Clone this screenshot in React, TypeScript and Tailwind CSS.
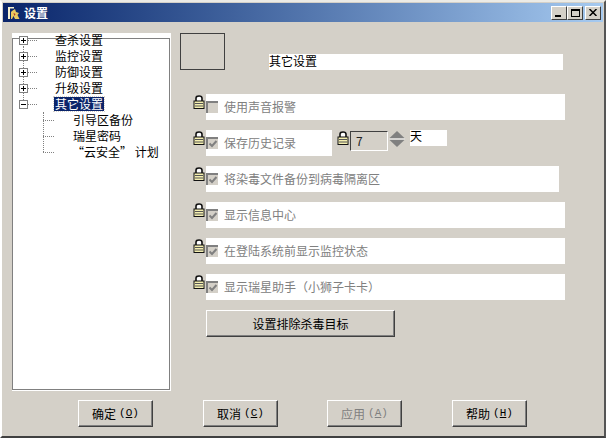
import React from "react";

const font = "[font-family:'Noto_Sans_CJK_SC','Liberation_Sans',sans-serif]";

const Lock = () => (
  <svg width="12" height="14" viewBox="0 0 12 14" className="shrink-0">
    <path d="M3 7V3.2C3 1.6 4 1 6 1s3 .6 3 2.2V7" fill="#fff" stroke="#111" strokeWidth="1.6" />
    <rect x="1" y="6" width="10" height="7.5" fill="#f4efb0" stroke="#111" />
    <path d="M2 8.5h8M2 11h8" stroke="#555" strokeWidth="1" />
  </svg>
);

const Check = ({ checked }: { checked: boolean }) => (
  <div className="relative w-3 h-3 shrink-0 bg-[#d4d0c8] border-l-2 border-t-2 border-[#808080]">
    {checked && (
      <svg width="10" height="10" viewBox="0 0 10 10" className="absolute left-0 top-0">
        <path d="M1.5 4.5L4 7L8.5 2" fill="none" stroke="#808080" strokeWidth="2" />
      </svg>
    )}
  </div>
);

const OptionRow = ({ label, checked = true, w = "w-[359px]", mt = "mt-[10px]" }: { label: string; checked?: boolean; w?: string; mt?: string }) => (
  <div className={`flex items-start ${mt}`}>
    <div className="w-[13px] ml-[23px] pt-[1px]">
      <Lock />
    </div>
    <div className={`flex items-center h-[26px] bg-white gap-[6px] ${w}`}>
      <Check checked={checked} />
      <span className="text-[12px] leading-none text-[#808080] [text-spacing-trim:space-all]">{label}</span>
    </div>
  </div>
);

const DlgButton = ({ children, w = "w-[75px]", disabled }: { children: React.ReactNode; w?: string; disabled?: boolean }) => (
  <div
    className={`flex items-center justify-center h-[27px] ${w} text-[12px] bg-[#d4d0c8] border border-t-white border-l-white border-r-[#404040] border-b-[#404040] shadow-[inset_-1px_-1px_0_#808080] ${disabled ? "text-[#808080]" : "text-black"}`}
  >
    {children}
  </div>
);

// accelerator key like (O), underlined letter in a narrow mono face
const Accel = ({ k }: { k: string }) => (
  <span className="ml-[3px] text-[11px] [font-family:'Liberation_Mono',monospace]">
    (<span className="underline">{k}</span>)
  </span>
);

const CaptionBtn = ({ children }: { children: React.ReactNode }) => (
  <div className="w-4 h-[14px] bg-[#d4d0c8] border border-t-white border-l-white border-r-[#404040] border-b-[#404040] flex items-center justify-center">
    {children}
  </div>
);

const Expander = ({ open }: { open?: boolean }) => (
  <div className="flex items-center shrink-0">
    <div className="relative w-[9px] h-[9px] border border-[#808080] bg-white">
      <div className="absolute left-[1px] top-[3px] w-[5px] h-[1px] bg-black" />
      {!open && <div className="absolute left-[3px] top-[1px] w-[1px] h-[5px] bg-black" />}
    </div>
    <div className="w-[9px] border-t border-dotted border-[#808080]" />
  </div>
);

const TopNode = ({ label, open, selected }: { label: string; open?: boolean; selected?: boolean }) => (
  <div className="flex items-center h-4 pl-[7px]">
    <Expander open={open} />
    <span
      className={`ml-[17px] px-[1px] h-[14px] leading-[14px] text-[12px] ${selected ? "bg-[#0a246a] text-white outline-1 outline-dotted outline-[#d4d0c8]" : "text-black"}`}
    >
      {label}
    </span>
  </div>
);

const SubNode = ({ label, indent = "ml-[19px]" }: { label: string; indent?: string }) => (
  <div className="flex items-center h-4 pl-[31px]">
    <div className="w-[11px] border-t border-dotted border-[#808080]" />
    <span className={`${indent} text-[12px] leading-none text-black`}>{label}</span>
  </div>
);

export default function App() {
  return (
    <div className={`w-[606px] h-[438px] flex flex-col overflow-hidden bg-[#d4d0c8] border-l-2 border-t-2 border-l-white border-t-[#ecebe6] border-r-2 border-r-[#555] border-b-2 border-b-[#404040] ${font}`}>
      {/* Title bar */}
      <div className="flex items-center shrink-0 h-[19px] mt-[1px] mx-[1px] pl-[4px] pr-[2px] bg-gradient-to-r from-[#0a246a] to-[#a6caf0]">
        <svg width="14" height="14" viewBox="0 0 14 14" className="shrink-0">
          <path d="M1 1h6v1.5H3V13H1z" fill="#f5f0d0" />
          <path d="M5 5l3-2 1 3 3 1-1.5 2 2 4H8L6.5 10 5 13H4V6z" fill="#e8c860" />
          <path d="M6.5 7l2 1-1 2z" fill="#b03020" />
        </svg>
        <span className="ml-[3px] text-[12px] font-bold text-white leading-none">设置</span>
        <div className="ml-auto flex">
          <CaptionBtn>
            <div className="w-[6px] h-[2px] bg-black mt-[6px] -ml-[2px]" />
          </CaptionBtn>
          <CaptionBtn>
            <div className="w-[9px] h-[8px] border border-t-2 border-black" />
          </CaptionBtn>
          <div className="ml-[2px]">
            <CaptionBtn>
              <svg width="8" height="7" viewBox="0 0 8 7">
                <path d="M0.5 0L7.5 7M7.5 0L0.5 7" stroke="#000" strokeWidth="1.5" />
              </svg>
            </CaptionBtn>
          </div>
        </div>
      </div>

      {/* Main area */}
      <div className="flex flex-1 items-start">
        {/* Tree */}
        <div className="relative w-[159px] h-[358px] ml-[10px] mt-[11px] bg-white shrink-0 overflow-hidden">
          {/* sunken border starts a few px below the white, the first row runs over it */}
          <div className="absolute left-0 right-[1px] top-[5px] bottom-[1px] border border-[#808080]" />
          <div className="absolute left-[11px] top-[13px] h-[56px] border-l border-dotted border-[#808080]" />
          <div className="absolute left-[31px] top-[79px] h-[40px] border-l border-dotted border-[#808080]" />
          <div className="relative pt-[1px]">
            <div className="h-[14px] overflow-hidden">
              <div className="-mt-[2px]">
                <TopNode label="查杀设置" />
              </div>
            </div>
            <TopNode label="监控设置" />
            <TopNode label="防御设置" />
            <TopNode label="升级设置" />
            <TopNode label="其它设置" open selected />
            <SubNode label="引导区备份" />
            <SubNode label="瑞星密码" />
            <SubNode label="“云安全” 计划" indent="ml-[18px]" />
          </div>
        </div>

        {/* Settings panel */}
        <div className="flex flex-col ml-[-1px] mt-[11px]">
          <div className="flex items-end ml-[10px]">
            <div className="w-[45px] h-[37px] border border-[#404040] bg-[#d4d0c8]" />
            <div className="ml-[44px] w-[294px] h-[16px] bg-white text-[12px] leading-[14px] text-black">其它设置</div>
          </div>

          <OptionRow label="使用声音报警" checked={false} mt="mt-[24px]" />

          <div className="flex items-start mt-[10px]">
            <div className="w-[13px] ml-[23px] pt-[1px]">
              <Lock />
            </div>
            <div className="flex items-center h-[26px] w-[126px] bg-white gap-[6px]">
              <Check checked />
              <span className="text-[12px] leading-none text-[#808080]">保存历史记录</span>
            </div>
            <div className="ml-[5px] mt-[1px]">
              <Lock />
            </div>
            <div className="ml-[1px] mt-[1px] flex items-center w-[38px] h-[20px] pl-[5px] bg-[#d4d0c8] border border-t-[#404040] border-l-[#404040] border-r-white border-b-white text-[12px] text-[#222]">
              7
            </div>
            <svg width="16" height="18" viewBox="0 0 16 18" className="ml-[1px]">
              <rect width="16" height="18" fill="#d4d0c8" />
              <path d="M8 1L16 8.5H0z" fill="#808080" />
              <path d="M8 17L0 9.5H16z" fill="#808080" />
              <path d="M0 9h16" stroke="#fff" />
            </svg>
            <div className="ml-[5px] w-[37px] h-[16px] bg-white text-[12px] leading-[12px] text-black">天</div>
          </div>

          <OptionRow label="将染毒文件备份到病毒隔离区" w="w-[353px]" />
          <OptionRow label="显示信息中心" />
          <OptionRow label="在登陆系统前显示监控状态" />
          <OptionRow label="显示瑞星助手（小狮子卡卡）" />

          <div className="ml-[36px] mt-[10px]">
            <DlgButton w="w-[189px]">设置排除杀毒目标</DlgButton>
          </div>
        </div>
      </div>

      {/* Footer buttons */}
      <div className="flex shrink-0 h-[36px] pl-[76px] gap-[50px]">
        <DlgButton>确定<Accel k="O" /></DlgButton>
        <DlgButton>取消<Accel k="C" /></DlgButton>
        <div className="-ml-[1px]">
          <DlgButton disabled>应用<Accel k="A" /></DlgButton>
        </div>
        <DlgButton>帮助<Accel k="H" /></DlgButton>
      </div>
    </div>
  );
}
